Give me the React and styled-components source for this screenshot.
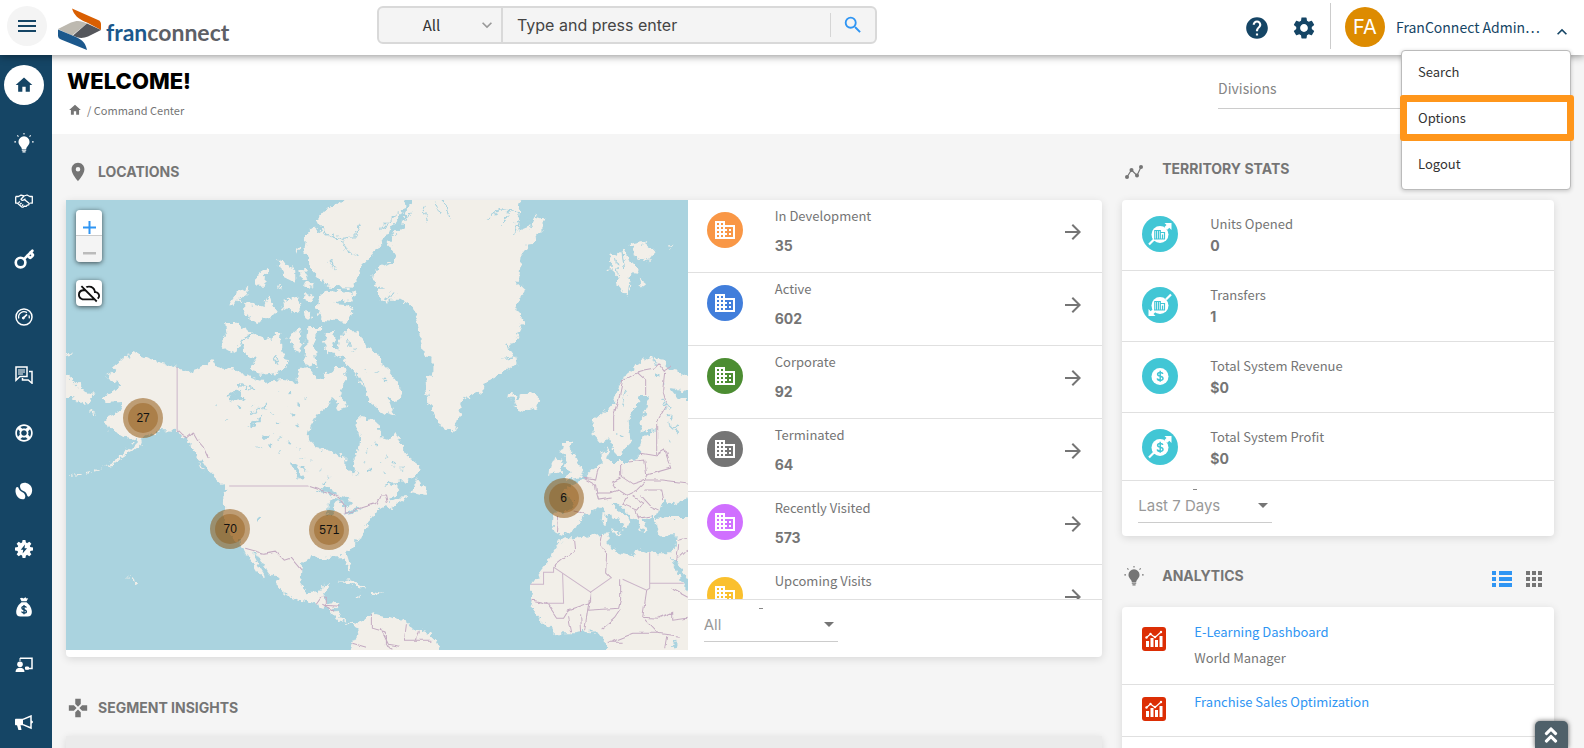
import React from "react";
import styled, { createGlobalStyle } from "styled-components";
import {
  MdHome,
  MdPlace,
  MdGamepad,
  MdSearch,
  MdHelp,
  MdSettings,
  MdBusiness,
  MdArrowForward,
  MdArrowDropDown,
  MdKeyboardArrowUp,
  MdKeyboardArrowDown,
  MdOutlineCloudOff,
  MdApps,
} from "react-icons/md";
import { FaRegLifeRing, FaAngleDoubleUp } from "react-icons/fa";
import { Key } from "lucide-react";

const locations = [
  { label: "In Development", value: "35", color: "#f99746" },
  { label: "Active", value: "602", color: "#417edb" },
  { label: "Corporate", value: "92", color: "#4c8d32" },
  { label: "Terminated", value: "64", color: "#757575" },
  { label: "Recently Visited", value: "573", color: "#d070ff" },
  { label: "Upcoming Visits", value: "", color: "#fac02e" },
];

const stats = [
  { label: "Units Opened", value: "0", icon: "opened" },
  { label: "Transfers", value: "1", icon: "transfer" },
  { label: "Total System Revenue", value: "$0", icon: "revenue" },
  { label: "Total System Profit", value: "$0", icon: "profit" },
];

const clusters = [
  { count: "27", x: 77, y: 218 },
  { count: "70", x: 164, y: 329 },
  { count: "571", x: 263, y: 330 },
  { count: "6", x: 497, y: 298 },
];

const BulbIcon = ({ size = 18 }) => (
  <svg width={size} height={size} viewBox="0 0 18 18" fill="currentColor">
    <path d="M9 3a5 5 0 0 0-5 5c0 2 1.500 3.300 2.300 4.500.5.700.7 1.300.7 1.800h4c0-.5.2-1.100.7-1.800C12.500 11.300 14 10 14 8a5 5 0 0 0-5-5zM7 14.900h4v1H7zM7.600 16.500h2.800V17.600H7.600z" />
    <path
      d="M9 0v1.400M3 2.200l1 1M15 2.200l-1 1M.300 8h1.500M16.200 8h1.500"
      stroke="currentColor"
      strokeWidth="1"
    />
  </svg>
);

const HandshakeIcon = () => (
  <svg width="18" height="14" viewBox="0 0 18 14" fill="none" stroke="currentColor" strokeWidth="1.300" strokeLinejoin="round">
    <path d="M.7 2.500H3.500L6 1.200 9 2l3-1 2.800 1.500h2.500v6.700h-2.200" />
    <path d="M.7 2.500v6.700h1.800l4 3.500c.8.600 1.500.5 2.100 0l1-.5 1.600.2 1-1.200 1.400-.3.700-1.500-5-4" />
    <path d="M9 2 6 5.200c.5 1.400 2 1.500 3 .6l1.500-1.100" />
    <path d="M3.300 8.700 5 7.500M5 10.300l1.600-1.400M7 11.800l1.300-1.300" />
  </svg>
);

const GaugeIcon = () => (
  <svg width="18" height="18" viewBox="0 0 18 18" fill="none" stroke="currentColor">
    <circle cx="9" cy="9" r="8" strokeWidth="1.500" />
    <path d="M3.800 10.500A5.400 5.400 0 0 1 12 4.600M14 7.400a5.400 5.400 0 0 1 .2 3" strokeWidth="1.300" />
    <path d="M8 10.300 12 6.400" strokeWidth="1.700" />
    <circle cx="8.300" cy="10" r="1" fill="currentColor" />
  </svg>
);

const ChatIcon = () => (
  <svg width="18" height="18" viewBox="0 0 18 18" fill="none" stroke="currentColor">
    <path d="M1 1h11v9.500H5L1 14.200z" strokeWidth="1.500" />
    <path d="M3 4h7M3 6h7M3 8h5" strokeWidth="1" />
    <path d="M14 5.500h3v11.700L13.200 14H7.500v-2" strokeWidth="1.500" />
  </svg>
);

const LeavesIcon = () => (
  <svg width="18" height="18" viewBox="0 0 18 18" fill="currentColor">
    <path d="M6.500 1.500c4-2 9 .5 10.300 4.500.9 3.200 0 6-2.300 8.300-1 .7-2 .3-2.300-.8-.6-2.300-1.500-3.400-3.800-4.500C5 7.500 3.800 3.500 6.500 1.500z" />
    <path d="M1 5.800c.5-1 1.700-1.300 2.300-.3.800 2.300 1.700 3.500 4.200 4.800 2.700 1.400 3.700 4.600 1.900 6.700-2.800 1-6.600-.7-8-4C.300 10.500.200 8 1 5.800z" />
  </svg>
);

const GearBoltIcon = () => (
  <svg width="18" height="18" viewBox="0 0 18 18">
    <g fill="currentColor">
      <circle cx="9" cy="9" r="6.700" />
      {[0, 45, 90, 135, 180, 225, 270, 315].map((a) => (
        <path key={a} d="M7 3 7.600 0h2.800L11 3z" transform={`rotate(${a} 9 9)`} />
      ))}
    </g>
    <path d="M10 4.500 5.800 9.700h2.500L7.600 13.600l4.500-5.400H9.500z" fill="#154565" />
  </svg>
);

const MoneyBagIcon = () => (
  <svg width="16" height="20" viewBox="0 0 16 20">
    <path d="M4 1.200 6 .8l1.500.8L9.500.300 10.500 1.500l1.700-.3L10.500 4.300h-5z" fill="currentColor" />
    <path d="M5.500 5.300h5c3 2.200 5.300 6 5.300 9.700 0 3-1.500 4.500-4.300 4.500h-7C1.700 19.500.2 18 .2 15c0-3.700 2.300-7.500 5.300-9.700z" fill="currentColor" />
    <path d="M10.300 10.600c-.4-1.700-4.400-1.700-4.400.4 0 2.200 4.500 1.200 4.500 3.400 0 2.100-4.500 2-4.700.1M8 8v9.200" fill="none" stroke="#154565" strokeWidth="1.400" />
  </svg>
);

const TrainerIcon = () => (
  <svg width="18" height="16" viewBox="0 0 18 16" fill="currentColor">
    <path d="M5 1.200h12v10.300h-3.500" fill="none" stroke="currentColor" strokeWidth="1.500" />
    <path d="M5 1v3M10.500 10h3v2.300h-3z" stroke="currentColor" strokeWidth="1" />
    <circle cx="5" cy="7.200" r="2.800" />
    <path d="M.5 15c0-3 2-4.300 4.500-4.300S9.500 12 9.500 15z" />
  </svg>
);

const HornIcon = () => (
  <svg width="18" height="16" viewBox="0 0 18 16" fill="currentColor">
    <path d="M0 4.800C0 4 .500 3.800 1 3.800h7v6.400H1c-.600 0-1-.4-1-1z" />
    <path d="M2 10h3.500l1 5H3.400z" />
    <path d="M8 4.400 16 1v12L8 9.600" fill="none" stroke="currentColor" strokeWidth="1.500" />
    <path d="M16 5.500c1.200 0 2 .7 2 1.500s-.8 1.500-2 1.500z" />
  </svg>
);

const TrendIcon = () => (
  <svg width="18" height="14" viewBox="0 0 18 14" fill="#757575">
    <path d="M2 12 6.500 5 12 10.500 16 2" fill="none" stroke="#757575" strokeWidth="1.200" />
    <circle cx="2" cy="12" r="2" />
    <circle cx="6.500" cy="5" r="2" />
    <circle cx="12" cy="10.500" r="2" />
    <circle cx="16" cy="2" r="2" />
  </svg>
);

const ListIcon = () => (
  <svg width="20" height="16" viewBox="0 0 20 16" fill="currentColor">
    <path d="M0 0h4v4H0zM7 0h13v4H7zM0 6h4v4H0zM7 6h13v4H7zM0 12h4v4H0zM7 12h13v4H7z" />
  </svg>
);

const ChartIcon = () => (
  <svg width="24" height="24" viewBox="0 0 24 24">
    <rect width="24" height="24" rx="3" fill="#dc2e05" />
    <path d="M4 14h3v6H4zM8.500 11h3v9h-3zM13 13h3v7h-3zM17.500 9h3v11h-3z" fill="#fff" />
    <path d="m4.500 10.500 4-3.500 4.500 3.500L19 5" fill="none" stroke="#fff" strokeWidth="1.200" />
    <g fill="#fff">
      <circle cx="4.500" cy="10.500" r="1.200" />
      <circle cx="8.500" cy="7" r="1.200" />
      <circle cx="13" cy="10" r="1.200" />
      <circle cx="19" cy="5" r="1.200" />
    </g>
  </svg>
);

const StatIcon = ({ kind }) => (
  <svg width="36" height="36" viewBox="0 0 36 36">
    <circle cx="18" cy="18" r="18" fill="#41c6d5" />
    {kind !== "revenue" && (
      <g transform={kind === "transfer" ? "rotate(180 18 18)" : undefined}>
        <path d="m7 28.500 5-5M23 13l5-5" stroke="#fff" strokeWidth="2.200" />
        <path d="M22.500 7h7v7l-2.200-2.200-2 2-2.800-2.800 2-2z" fill="#fff" />
      </g>
    )}
    <circle cx="18" cy="18.500" r="8.500" fill="#fff" />
    {kind === "opened" || kind === "transfer" ? (
      <g fill="none" stroke="#41c6d5" strokeWidth="1.200">
        <path d="M12.800 23v-8.500h5.500V23M14.600 15v8M16.500 15v8M18.500 16.500h4V23" />
        <path d="M20.500 18.500V23M12 23h11" />
      </g>
    ) : (
      <g fill="none" stroke="#41c6d5" strokeWidth="1.500">
        <path d="M20.800 16c-.3-2-5.200-2.100-5.200.3 0 2.700 5.400 1.400 5.400 4.100 0 2.600-5.600 2.400-5.700 0M18.200 12.800v11" />
      </g>
    )}
  </svg>
);

const LogoMark = () => (
  <svg width="44" height="44" viewBox="0 0 44 44">
    <path d="M14 .500 40 12c2.500 1 3 2.500 3 4.500V22L29 14.500C20 11 16 7 14 .500z" fill="#d95f02" />
    <path d="M0 21 13 14.500c6-2.500 10-2 16 1L14 27.500 2 22z" fill="#bdb9b0" />
    <path d="m15 27.500 14-12L43 22l-13 6.500c-5 2-10 2-15-1z" fill="#54565b" />
    <path d="M0 21.500 18 29c7 3 9.500 6.500 11 13L3 31.500c-2-1-3-2-3-4z" fill="#1b588c" />
  </svg>
);

// Land, lakes and borders share one 621 x 450 coordinate space.
const land = [
  "M67 153 56 160 49 165 47 172 39 177 46 181 53 182 55 187 46 193 35 197 42 203 54 202 56 208 49 213 42 216 40 222 43 229 52 233 59 237 67 238 70 242 64 248 56 254 46 262 34 268 47 264 58 257 71 247 79 236 84 233 94 230 111 231 117 237 126 245 128 250 131 257 137 262 142 270 149 278 159 287 158 297 159 307 158 315 162 327 166 337 177 346 180 353 184 360 188 365 192 372 200 379 197 372 192 364 187 353 191 355 196 363 202 372 211 380 212 388 219 394 231 399 242 401 251 405 264 410 272 420 281 424 286 423 291 427 292 435 286 443 282 460 376 460 369 442 364 433 349 429 337 420 314 415 307 413 299 417 292 423 286 421 280 423 275 417 267 410 273 404 267 402 261 403 257 397 262 388 264 384 256 386 251 392 241 393 234 383 235 370 236 363 246 357 257 358 267 356 277 356 280 362 283 372 285 368 282 360 280 353 289 343 296 337 297 328 302 322 311 310 321 306 325 308 341 298 329 299 322 302 321 298 329 295 334 290 329 284 318 287 321 283 341 281 352 273 352 265 339 255 334 243 329 232 324 240 314 237 312 223 301 218 292 217 291 227 294 240 292 250 286 258 289 265 286 276 279 268 279 258 267 252 251 248 242 240 244 227 252 213 262 206 267 197 274 210 282 208 274 197 279 180 279 167 269 167 261 173 251 180 242 167 234 168 231 182 217 180 197 182 184 177 171 170 151 167 147 160 134 168 124 172 111 167 97 163 81 159z",
  "M-10 168 5 178 18 192 28 195 20 205 6 198-10 198z",
  "M-6 151 7 153-6 157z",
  "M257 143 261 132 269 130 267 145 272 150 274 137 279 130 291 132 301 147 314 157 321 170 337 190 331 202 321 197 329 217 317 213 304 203 296 183 284 167 275 157 261 153z",
  "M176 143 186 133 204 140 209 132 214 132 214 150 224 163 211 173 194 175 181 167 191 160 177 153z",
  "M159 122 167 122 184 132 176 140 171 150 164 154 155 147 160 132z",
  "M162 105 171 92 182 87 181 93 167 106z",
  "M179 103 197 107 202 95 205 104 211 113 191 122 179 115z",
  "M190 76 200 70 199 86 190 86z",
  "M212 60 221 64 229 73 229 83 217 77z",
  "M233 68 240 72 242 81 235 80z",
  "M229 48 232 48 230 54z",
  "M238 84 246 83 244 88 238 87z",
  "M211 84 216 92 213 90z",
  "M216 100 232 98 234 113 228 113 217 108z",
  "M238 93 248 96 245 102 238 100z M238 110 245 113 243 120 238 117z",
  "M247 27 240 35 238 52 246 70 262 87 287 88 297 65 304 57 317 40 331 20 339 8 337-10 279-10 279 0 262 8 251 20 257 32 250 30z",
  "M251 100 261 90 289 93 286 100 276 100 267 104 284 106 286 112 282 122 257 120 249 110z",
  "M241 127 255 127 247 140 251 167 239 163z",
  "M221 138 234 127 237 143 231 152z",
  "M306 75 317 64 324 68 323 84 311 87z M310 90 323 90 322 104 314 100z",
  "M344-10 344 4 338 14 337 26 326 36 321 43 329 55 326 62 314 68 308 78 312 88 324 92 314 100 334 100 346 107 352 123 356 150 362 157 367 160 367 173 359 180 362 203 372 223 387 233 391 220 397 200 414 192 421 180 437 173 450 163 448 155 440 150 450 137 457 122 449 107 459 90 451 83 454 57 466 42 477 28 477 20 467 17 462 26 452 30 451 18 453 8 458-10z",
  "M544 53 550 56 557 50 562 60 572 70 564 77 560 97 552 87 551 77 543 70z M564 45 577 42 589 52 581 62 566 55z M572 77 580 83 574 88z M602 47 607 46 604 49z",
  "M444 192 450 199 457 194 466 192 473 198 469 208 457 212 447 208 452 203 443 198z",
  "M640 182 621 177 614 172 602 170 599 160 581 157 559 173 552 187 544 207 527 220 527 235 534 243 544 238 547 253 554 257 558 249 564 243 562 220 567 210 574 197 582 197 581 207 574 221 574 232 592 230 577 236 573 245 572 257 562 262 547 262 540 257 542 247 535 252 535 264 527 268 517 278 511 283 501 287 497 293 505 300 507 310 487 313 486 330 496 335 511 328 514 318 527 310 534 307 544 317 559 323 555 331 561 327 564 320 551 310 544 303 551 303 561 313 571 323 577 335 581 330 576 320 587 317 589 327 594 335 611 335 609 345 604 353 582 353 571 348 567 356 554 352 542 347 542 333 524 335 507 338 496 338 486 352 484 358 472 373 464 385 466 400 464 407 474 420 489 433 507 433 527 430 533 437 539 438 540 460 640 460z",
  "M496 242 506 242 502 249 507 254 511 264 516 270 513 277 499 280 503 271 498 268 501 259 494 250z",
  "M487 258 496 261 494 272 483 275 484 265z",
  "M352 275 350 281 361 288 359 296 344 292z",
  "M272 382 284 380 301 388 293 388 282 383z M304 390 317 393 305 395z M290 394 296 395 290 396z",
  "M545 330 555 332 551 335z M536 312 540 313 539 325 535 324z",
  "M67 380 71 381 69 384 67 383z M60 376 64 377 62 378z",
  "M28 271 33 269 30 273z M20 273 25 272 22 275z M10 274 17 274 12 276z M4 274 8 275 5 276z",
  "M72 243 77 240 75 247z M24 211 30 213 26 214z M133 262 138 270 135 268z",
];

const seas = [
  "M604 188 640 194 640 202 612 198z",
  "M592 311 597 300 607 305 621 297 640 297 640 317 601 317 589 318z",
  "M604 358 608 358 640 410 625 400z",
  "M160 197 170 191 176 190 174 196 179 199 168 201z M181 227 193 218 199 214 190 225z M196 236 206 234 198 240z",
  "M225 262 229 262 238 279 232 280z M235 266 238 266 240 272z",
  "M250 292 260 286 270 291 272 296 261 293z M261 316 263 301 269 298 276 299 268 304 267 316z M275 297 285 300 279 309 275 304z M276 316 284 310 296 307 286 314z",
  "M603 446 610 442 608 450z",
];

const lakes = [
  [172, 206, 2], [186, 205, 1], [198, 207, 2], [205, 214, 1], [212, 222, 2], [220, 205, 1],
  [226, 214, 2], [233, 206, 2], [239, 197, 1], [223, 193, 2], [214, 190, 1], [232, 226, 2],
  [214, 238, 1], [204, 245, 2], [214, 251, 1], [223, 243, 2], [233, 248, 1], [192, 247, 1],
  [236, 258, 1], [246, 262, 1], [255, 268, 1], [262, 276, 1], [258, 282, 2], [298, 262, 1],
  [305, 270, 2], [313, 262, 1], [320, 256, 1], [327, 264, 2], [318, 272, 1], [302, 250, 1],
  [309, 245, 2], [336, 269, 1], [291, 275, 1], [192, 318, 2], [160, 220, 1], [150, 205, 1],
  [591, 176, 2], [604, 218, 2], [610, 226, 2], [599, 183, 1], [598, 207, 1], [603, 240, 1],
  [555, 236, 2], [549, 233, 1], [310, 172, 1], [318, 180, 2], [298, 172, 1], [288, 150, 1],
];

const fjords =
  "M251 25 260 35 272 39 288 37 294 24M277 40 280 50M262 60 270 70M282 50 290 56M314 30 332 12M330 28 344 14M356 8 360 22M370 3 374 15M376 0 384 20M420 18 434 10 452 12M434 24 444 14M447 36 455 12M461 18 464 30M455 60 462 58M440 145 450 150M434 160 448 158M555 50 558 70M549 60 552 75M170 185 190 190M184 215 200 205M150 165 156 160M281 140 283 147M269 130 270 145M560 190 556 205M586 158 590 166M596 200 604 210M600 222 612 232M208 155 212 165M318 100 330 94";

const borders =
  "M250 403 255 396 260 396 260 405 272 406M256 404 268 410M306 414 306 428 320 432 320 445 326 448M286 443 300 447M314 428 322 444 334 446M340 424 338 440 364 440M352 430 349 440M547 230 547 215 552 200 556 180 570 172 577 170 588 168 592 164 598 172 596 190 600 205 590 222M570 172 579 180 579 195M596 172 605 166M590 222 590 240 590 255M572 252 590 255 598 250 604 268 580 275 578 260 562 262M554 264 554 276 566 284 578 280 580 275M532 266 529 280 517 278 529 285 530 293 544 293 552 290 560 295 570 290 578 282M530 293 532 300 545 298M507 311 520 314M492 316 491 331M554 278 546 282 550 288M578 280 595 280 621 283M560 297 556 304 570 310 576 302 566 296M574 295 584 306 592 310M578 290 595 290 597 300M568 310 572 318 586 316M611 340 621 338M612 345 610 360 621 350M507 340 508 350 487 367M536 335 534 345 540 353 539 373 544 378M554 380 554 400 552 408 521 410 524 392 524 402 501 410 496 418 490 418 480 403 466 400M580 390 576 417 591 433 567 433 544 442M606 388 621 396M576 417 592 418 606 412 606 420 621 418M591 433 612 436M502 416 505 432M514 415 515 431M521 410 518 430M534 430 548 418 554 409M540 442H555M600 436 598 448M279 305 279 313 286 310 295 308 311 303 315 294 319 294 321 303M179 348 197 353 209 351 218 360 224 358 235 371M242 286 257 291 272 297 278 305M111 231 117 237 121 238 127 233 131 240 137 247 142 258";

const straightBorders =
  "M111 167V231M163 286H242M487 367V372H477V384H464M487 367 524 392 544 378M556 379 580 390 583 388V352M496 373 497 403H477M583 383H617M496 373 487 367";

const WorldMap = () => (
  <MapSvg viewBox="0 0 621 450" preserveAspectRatio="xMidYMid slice" aria-hidden="true">
    <defs>
      <filter id="coast" x="-5%" y="-5%" width="110%" height="110%">
        <feTurbulence type="fractalNoise" baseFrequency="0.16" numOctaves="3" seed="4" />
        <feDisplacementMap in="SourceGraphic" scale="9" xChannelSelector="R" yChannelSelector="G" />
      </filter>
      <filter id="edge">
        <feTurbulence type="fractalNoise" baseFrequency="0.1" numOctaves="2" seed="9" />
        <feDisplacementMap in="SourceGraphic" scale="5" xChannelSelector="R" yChannelSelector="G" />
      </filter>
    </defs>
    <g filter="url(#coast)">
      {land.map((d) => (
        <path key={d} d={d} fill="#f2efe9" />
      ))}
      {seas.map((d) => (
        <path key={d} d={d} fill="#aad3df" />
      ))}
      {lakes.map(([x, y, r]) => (
        <ellipse key={`${x}-${y}`} cx={x} cy={y} rx={r} ry={r * 0.7} fill="#aad3df" />
      ))}
      <path d={fjords} fill="none" stroke="#aad3df" strokeWidth="1.300" />
    </g>
    <path d={borders} fill="none" stroke="#c4abc2" strokeWidth="1" filter="url(#edge)" />
    <path d={straightBorders} fill="none" stroke="#cbb5c9" strokeWidth="1" />
  </MapSvg>
);

const App = () => (
  <Page>
    <GlobalStyle />
    <Header>
      <MenuButton aria-label="Menu">
        <svg width="18" height="12" viewBox="0 0 18 12" fill="#154565">
          <path d="M0 0h18v2H0zM0 5h18v2H0zM0 10h18v2H0z" />
        </svg>
      </MenuButton>
      <Logo href="#">
        <LogoMark />
        <LogoText>
          <b>fran</b>connect
        </LogoText>
      </Logo>
      <SearchBar>
        <ScopeBox>
          <ScopeSelect aria-label="Search in">
            <option>All</option>
          </ScopeSelect>
          <MdKeyboardArrowDown size={20} />
        </ScopeBox>
        <SearchInput aria-label="Search" placeholder="Type and press enter" />
        <SearchButton aria-label="Run search">
          <MdSearch size={22} />
        </SearchButton>
      </SearchBar>
      <HeaderTools>
        <ToolButton aria-label="Help">
          <MdHelp size={26} />
        </ToolButton>
        <ToolButton aria-label="Settings">
          <MdSettings size={26} />
        </ToolButton>
      </HeaderTools>
      <Account>
        <Avatar>FA</Avatar>
        <AccountButton>
          FranConnect Admin…
          <MdKeyboardArrowUp size={20} />
        </AccountButton>
        <AccountMenu>
          <MenuItem href="#">Search</MenuItem>
          <MenuItem href="#" $marked>
            Options
          </MenuItem>
          <MenuItem href="#">Logout</MenuItem>
        </AccountMenu>
      </Account>
    </Header>
    <Body>
      <Sidebar>
        <SideLink href="#" aria-label="Home">
          <span>
            <MdHome size={20} />
          </span>
        </SideLink>
        <SideLink href="#" aria-label="Ideas">
          <BulbIcon size={20} />
        </SideLink>
        <SideLink href="#" aria-label="Sales">
          <HandshakeIcon />
        </SideLink>
        <SideLink href="#" aria-label="Opener">
          <Key size={21} strokeWidth={3} />
        </SideLink>
        <SideLink href="#" aria-label="Performance">
          <GaugeIcon />
        </SideLink>
        <SideLink href="#" aria-label="Messages">
          <ChatIcon />
        </SideLink>
        <SideLink href="#" aria-label="Support">
          <FaRegLifeRing size={18} />
        </SideLink>
        <SideLink href="#" aria-label="Marketing">
          <LeavesIcon />
        </SideLink>
        <SideLink href="#" aria-label="Automation">
          <GearBoltIcon />
        </SideLink>
        <SideLink href="#" aria-label="Finance">
          <MoneyBagIcon />
        </SideLink>
        <SideLink href="#" aria-label="Training">
          <TrainerIcon />
        </SideLink>
        <SideLink href="#" aria-label="Campaigns">
          <HornIcon />
        </SideLink>
      </Sidebar>
      <Main>
        <PageHead>
          <div>
            <PageTitle>WELCOME!</PageTitle>
            <Breadcrumb>
              <MdHome size={14} />
              <span>/ Command Center</span>
            </Breadcrumb>
          </div>
          <DivisionSelect aria-label="Divisions">
            <option>Divisions</option>
          </DivisionSelect>
        </PageHead>
        <Columns>
          <div>
            <SectionHead $top={10}>
              <MdPlace size={22} />
              <SectionTitle>LOCATIONS</SectionTitle>
            </SectionHead>
            <LocationCard>
              <MapBox>
                <WorldMap />
                {clusters.map((c) => (
                  <Cluster
                    key={c.count}
                    style={{ left: `${(c.x / 621) * 100}%`, top: `${(c.y / 450) * 100}%` }}
                  >
                    <span>{c.count}</span>
                  </Cluster>
                ))}
                <MapControls>
                  <ZoomGroup>
                    <ZoomButton aria-label="Zoom in">
                      <svg width="13" height="13" viewBox="0 0 13 13" fill="#2f95f3">
                        <path d="M5.500 0h2v5.500H13v2H7.500V13h-2V7.500H0v-2h5.500z" />
                      </svg>
                    </ZoomButton>
                    <ZoomButton aria-label="Zoom out" $off>
                      <svg width="13" height="3" viewBox="0 0 13 3" fill="#bbb">
                        <path d="M0 0h13v2.500H0z" />
                      </svg>
                    </ZoomButton>
                  </ZoomGroup>
                  <CloudButton aria-label="Hide weather">
                    <MdOutlineCloudOff size={22} />
                  </CloudButton>
                </MapControls>
              </MapBox>
              <LocationSide>
                <LocationList>
                  {locations.map((item) => (
                    <LocationRow key={item.label}>
                      <RoundIcon $color={item.color}>
                        <MdBusiness size={24} />
                      </RoundIcon>
                      <RowText>
                        <RowLabel>{item.label}</RowLabel>
                        <LocationValue>{item.value}</LocationValue>
                      </RowText>
                      <RowArrow aria-label={item.label}>
                        <MdArrowForward size={24} />
                      </RowArrow>
                    </LocationRow>
                  ))}
                </LocationList>
                <CardFooter>
                  <Dash />
                  <FilterBox>
                    <FilterSelect aria-label="Location filter">
                      <option>All</option>
                    </FilterSelect>
                    <MdArrowDropDown size={24} />
                  </FilterBox>
                </CardFooter>
              </LocationSide>
            </LocationCard>
            <SectionHead $top={23}>
              <MdGamepad size={22} />
              <SectionTitle>SEGMENT INSIGHTS</SectionTitle>
            </SectionHead>
            <InsightCard />
          </div>
          <div>
            <SectionHead $top={10}>
              <TrendIcon />
              <SectionTitle $inset $raised>
                TERRITORY STATS
              </SectionTitle>
            </SectionHead>
            <Card>
              {stats.map((item) => (
                <StatRow key={item.label}>
                  <StatIcon kind={item.icon} />
                  <RowText>
                    <RowLabel>{item.label}</RowLabel>
                    <StatValue>{item.value}</StatValue>
                  </RowText>
                </StatRow>
              ))}
              <CardFooter $tight>
                <Dash />
                <FilterBox>
                  <FilterSelect aria-label="Period">
                    <option>Last 7 Days</option>
                  </FilterSelect>
                  <MdArrowDropDown size={24} />
                </FilterBox>
              </CardFooter>
            </Card>
            <SectionHead $top={15} $lift>
              <BulbIcon size={20} />
              <SectionTitle $inset>ANALYTICS</SectionTitle>
              <ViewSwitch>
                <ViewButton aria-label="List view" $active>
                  <ListIcon />
                </ViewButton>
                <ViewButton aria-label="Grid view">
                  <MdApps size={24} />
                </ViewButton>
              </ViewSwitch>
            </SectionHead>
            <Card>
              <ReportRow $first>
                <ChartIcon />
                <div>
                  <ReportLink href="#">E-Learning Dashboard</ReportLink>
                  <ReportNote>World Manager</ReportNote>
                </div>
              </ReportRow>
              <ReportRow>
                <ChartIcon />
                <ReportLink href="#">Franchise Sales Optimization</ReportLink>
              </ReportRow>
              <ReportRow />
            </Card>
          </div>
        </Columns>
      </Main>
    </Body>
    <ToTop aria-label="Back to top">
      <FaAngleDoubleUp size={20} />
    </ToTop>
  </Page>
);

export default App;

const sans = `"Noto Sans CJK SC", "Noto Sans", sans-serif`;
const display = `Inter, "Open Sans", sans-serif`;

const GlobalStyle = createGlobalStyle`
  * {
    box-sizing: border-box;
  }
  body {
    margin: 0;
    font-family: ${sans};
    font-size: 13px;
    line-height: 18px;
    color: #757575;
    background: #f5f5f5;
  }
  button, select, input {
    font: inherit;
    color: inherit;
    border: 0;
    padding: 0;
    margin: 0;
    background: none;
    appearance: none;
    outline: none;
  }
  a {
    text-decoration: none;
  }
  svg {
    display: block;
    flex-shrink: 0;
  }
`;

const Page = styled.div`
  height: 100vh;
  overflow: hidden;
  display: flex;
  flex-direction: column;
`;

const Header = styled.header`
  position: relative;
  z-index: 2;
  height: 55px;
  flex-shrink: 0;
  display: flex;
  align-items: flex-start;
  background: #fff;
  box-shadow: 0 1px 8px rgba(0, 0, 0, 0.45);
`;

const MenuButton = styled.button`
  width: 40px;
  height: 40px;
  margin: 6px 0 0 7px;
  border-radius: 50%;
  background: #f4f4f4;
  display: flex;
  align-items: center;
  justify-content: center;
`;

const Logo = styled.a`
  display: flex;
  margin: 8px 0 0 11px;
  width: 319px;
`;

const LogoText = styled.span`
  margin: 8px 0 0 4px;
  font-family: Lato, sans-serif;
  font-weight: 700;
  font-size: 23px;
  line-height: 32px;
  color: #5d6066;

  b {
    font-weight: 700;
    color: #1b588c;
  }
`;

const SearchBar = styled.form`
  width: 500px;
  height: 38px;
  margin-top: 6px;
  display: flex;
  border: 2px solid #d9d9d9;
  border-radius: 6px;
  background: #f4f4f4;
  color: #333;
`;

const ScopeBox = styled.div`
  width: 124px;
  padding-right: 4px;
  display: flex;
  align-items: center;
  border-right: 2px solid #d9d9d9;

  svg {
    color: #999;
  }
`;

const ScopeSelect = styled.select`
  flex: 1;
  padding-left: 7px;
  font-size: 15px;
  line-height: 24px;
  text-align-last: center;
`;

const SearchInput = styled.input`
  flex: 1;
  min-width: 0;
  padding-left: 14px;
  font-family: ${display};
  font-size: 16px;

  &::placeholder {
    color: #444;
    opacity: 1;
  }
`;

const SearchButton = styled.button`
  width: 45px;
  height: 24px;
  margin-top: 5px;
  display: flex;
  align-items: center;
  justify-content: center;
  border-left: 1px solid #d5d5d5;
  color: #2f95f3;
`;

const HeaderTools = styled.div`
  margin-left: auto;
  padding: 15px 13px 0 0;
  display: flex;
  gap: 21px;
  color: #154565;
`;

const ToolButton = styled.button`
  display: block;
`;

const Account = styled.div`
  position: relative;
  width: 254px;
  height: 46px;
  margin-top: 3px;
  padding: 4px 0 0 14px;
  display: flex;
  border-left: 1px solid #ccc;
`;

const Avatar = styled.span`
  width: 40px;
  height: 40px;
  border-radius: 50%;
  background: #dd8b00;
  color: #fff;
  font-family: ${display};
  font-size: 20px;
  line-height: 40px;
  text-align: center;
`;

const AccountButton = styled.button`
  margin-left: 11px;
  height: 40px;
  display: flex;
  align-items: center;
  gap: 12px;
  color: #154565;
  font-size: 14px;
  white-space: nowrap;

  svg {
    margin-top: 9px;
  }
`;

const AccountMenu = styled.nav`
  position: absolute;
  top: 47px;
  right: 13px;
  width: 170px;
  height: 140px;
  border: 1px solid #bbb;
  border-radius: 4px;
  background: #fff;
  box-shadow: 0 1px 4px rgba(0, 0, 0, 0.2);
`;

const MenuItem = styled.a`
  display: block;
  height: 46px;
  padding-left: 16px;
  line-height: 42px;
  color: #333;

  ${({ $marked }) =>
    $marked &&
    `
    margin: -2px -4px 2px -2px;
    padding-left: 11px;
    line-height: 32px;
    border: 7px solid #ff961b;
    border-radius: 3px;
  `}
`;

const Body = styled.div`
  flex: 1;
  min-height: 0;
  display: flex;
`;

const Sidebar = styled.nav`
  width: 52px;
  flex-shrink: 0;
  padding: 1px 4px 0 0;
  background: #154565;
`;

const SideLink = styled.a`
  height: 58px;
  display: flex;
  align-items: center;
  justify-content: center;
  color: #fff;

  span {
    width: 40px;
    height: 40px;
    display: flex;
    align-items: center;
    justify-content: center;
    border-radius: 50%;
    background: #fff;
    color: #154565;
  }
`;

const Main = styled.main`
  flex: 1;
  min-width: 0;
`;

const PageHead = styled.div`
  height: 79px;
  margin-right: 14px;
  padding: 12px 16px 0 15px;
  display: flex;
  justify-content: space-between;
  background: #fff;
`;

const PageTitle = styled.h1`
  margin: 0;
  font-family: ${display};
  font-weight: 800;
  font-size: 22px;
  line-height: 28px;
  color: #000;
`;

const Breadcrumb = styled.div`
  display: flex;
  align-items: center;
  gap: 5px;
  margin: 6px 0 0 1px;
  font-size: 11px;
  color: #757575;
`;

const DivisionSelect = styled.select`
  width: 336px;
  height: 42px;
  font-size: 14px;
  border-bottom: 1px solid #ccc;
  color: #858585;
`;

const Columns = styled.div`
  display: grid;
  grid-template-columns: minmax(0, 12fr) minmax(0, 5fr);
  gap: 20px;
  padding: 0 30px 0 14px;
`;

const SectionHead = styled.div`
  height: 56px;
  margin-top: ${({ $top }) => $top}px;
  padding: 0 0 ${({ $lift }) => ($lift ? 6 : 0)}px 12px;
  display: flex;
  align-items: center;

  > svg {
    width: 24px;
    margin-left: -12px;
  }
`;

const SectionTitle = styled.h2`
  margin: 0 0 0 ${({ $inset }) => ($inset ? 16 : 8)}px;
  padding-bottom: ${({ $raised }) => ($raised ? 6 : 0)}px;
  font-family: ${display};
  font-weight: 700;
  font-size: 14px;
  line-height: 20px;
`;

const Card = styled.div`
  background: #fff;
  border-radius: 4px;
  box-shadow: 0 2px 8px rgba(0, 0, 0, 0.12);
`;

const LocationCard = styled(Card)`
  display: grid;
  grid-template-columns: minmax(0, 3fr) minmax(0, 2fr);
`;

const MapBox = styled.div`
  position: relative;
  margin-bottom: 7px;
  overflow: hidden;
  background: #aad3df;
`;

const MapSvg = styled.svg`
  position: absolute;
  inset: 0;
  width: 100%;
  height: 100%;
`;

const Cluster = styled.div`
  position: absolute;
  width: 40px;
  height: 40px;
  margin: -20px 0 0 -20px;
  padding: 5px;
  border-radius: 50%;
  background: rgba(138, 75, 0, 0.5);

  span {
    display: block;
    border-radius: 50%;
    background: rgba(138, 75, 0, 0.37);
    color: #111;
    font-family: "Liberation Sans", sans-serif;
    font-size: 12px;
    line-height: 30px;
    text-align: center;
  }
`;

const MapControls = styled.div`
  position: absolute;
  top: 10px;
  left: 10px;
  display: flex;
  flex-direction: column;
  gap: 18px;
`;

const ZoomGroup = styled.div`
  width: 26px;
  border-radius: 4px;
  overflow: hidden;
  box-shadow: 0 1px 5px rgba(0, 0, 0, 0.65);
`;

const ZoomButton = styled.button`
  width: 26px;
  height: 26px;
  padding-top: 9px;
  display: flex;
  align-items: center;
  justify-content: center;
  background: ${({ $off }) => ($off ? "#f4f4f4" : "#fff")};
  border-bottom: ${({ $off }) => ($off ? "0" : "1px solid #ccc")};
`;

const CloudButton = styled.button`
  width: 26px;
  height: 26px;
  display: flex;
  align-items: center;
  justify-content: center;
  border-radius: 4px;
  background: #fff;
  color: #111;
  box-shadow: 0 1px 5px rgba(0, 0, 0, 0.65);
`;

const LocationSide = styled.div`
  display: flex;
  flex-direction: column;
`;

const LocationList = styled.ul`
  height: 399px;
  margin: 0;
  padding: 0;
  overflow: hidden;
  list-style: none;
`;

const LocationRow = styled.li`
  height: 73px;
  padding: 0 17px 0 19px;
  display: flex;
  border-bottom: 1px solid #e0e0e0;
`;

const RoundIcon = styled.span`
  width: 36px;
  height: 36px;
  margin-top: 12px;
  display: flex;
  align-items: center;
  justify-content: center;
  border-radius: 50%;
  background: ${({ $color }) => $color};
  color: #fff;
`;

const RowText = styled.div`
  flex: 1;
  margin-left: 32px;
  padding-top: 7px;
`;

const RowLabel = styled.div`
  line-height: 18px;
`;

const LocationValue = styled.div`
  margin-top: 12px;
  font-family: ${display};
  font-weight: 700;
  font-size: 14px;
  line-height: 18px;
`;

const StatValue = styled(LocationValue)`
  margin-top: 4px;
`;

const RowArrow = styled.button`
  height: 24px;
  margin-top: 20px;
`;

const CardFooter = styled.div`
  height: ${({ $tight }) => ($tight ? 56 : 58)}px;
  padding: 8px 16px 0;
  border-top: 1px solid #e0e0e0;
`;

const Dash = styled.div`
  width: 4px;
  height: 1px;
  margin-left: 55px;
  background: #888;
`;

const FilterBox = styled.div`
  width: 134px;
  height: 33px;
  display: flex;
  align-items: center;
  border-bottom: 1px solid #ccc;

  svg {
    margin: -2px -3px 0 0;
  }
`;

const FilterSelect = styled.select`
  flex: 1;
  font-family: ${display};
  font-size: 15px;
  line-height: 20px;
  color: #999;
`;

const InsightCard = styled(Card)`
  height: 120px;
  border-radius: 0;
  background: #ebebeb;
`;

const StatRow = styled.div`
  height: 71px;
  padding: 8px 20px 0;
  display: flex;
  border-bottom: 1px solid #e0e0e0;

  > svg {
    margin-top: 8px;
  }

  &:nth-child(4) {
    height: 67px;
    border-bottom: 0;
  }
`;

const ViewSwitch = styled.div`
  margin-left: auto;
  padding: 6px 8px 0 0;
  display: flex;
  align-items: center;
  gap: 10px;
`;

const ViewButton = styled.button`
  color: ${({ $active }) => ($active ? "#2f95f3" : "#757575")};
`;

const ReportRow = styled.div`
  height: ${({ $first }) => ($first ? 78 : 52)}px;
  padding: ${({ $first }) => ($first ? "20px 20px 0" : "12px 20px 0")};
  display: flex;
  align-items: flex-start;
  gap: 28px;
  border-bottom: 1px solid #e0e0e0;

  a {
    display: block;
    margin-top: -4px;
  }
`;

const ReportLink = styled.a`
  color: #2f95f3;
  line-height: 18px;
`;

const ReportNote = styled.div`
  margin-top: 8px;
  line-height: 18px;
`;

const ToTop = styled.button`
  position: fixed;
  right: 16px;
  bottom: 0;
  width: 33px;
  height: 27px;
  padding-left: 6px;
  border-radius: 5px 5px 0 0;
  background: #4f6069;
  color: #fff;
  box-shadow: 0 0 5px rgba(0, 0, 0, 0.6);
`;
